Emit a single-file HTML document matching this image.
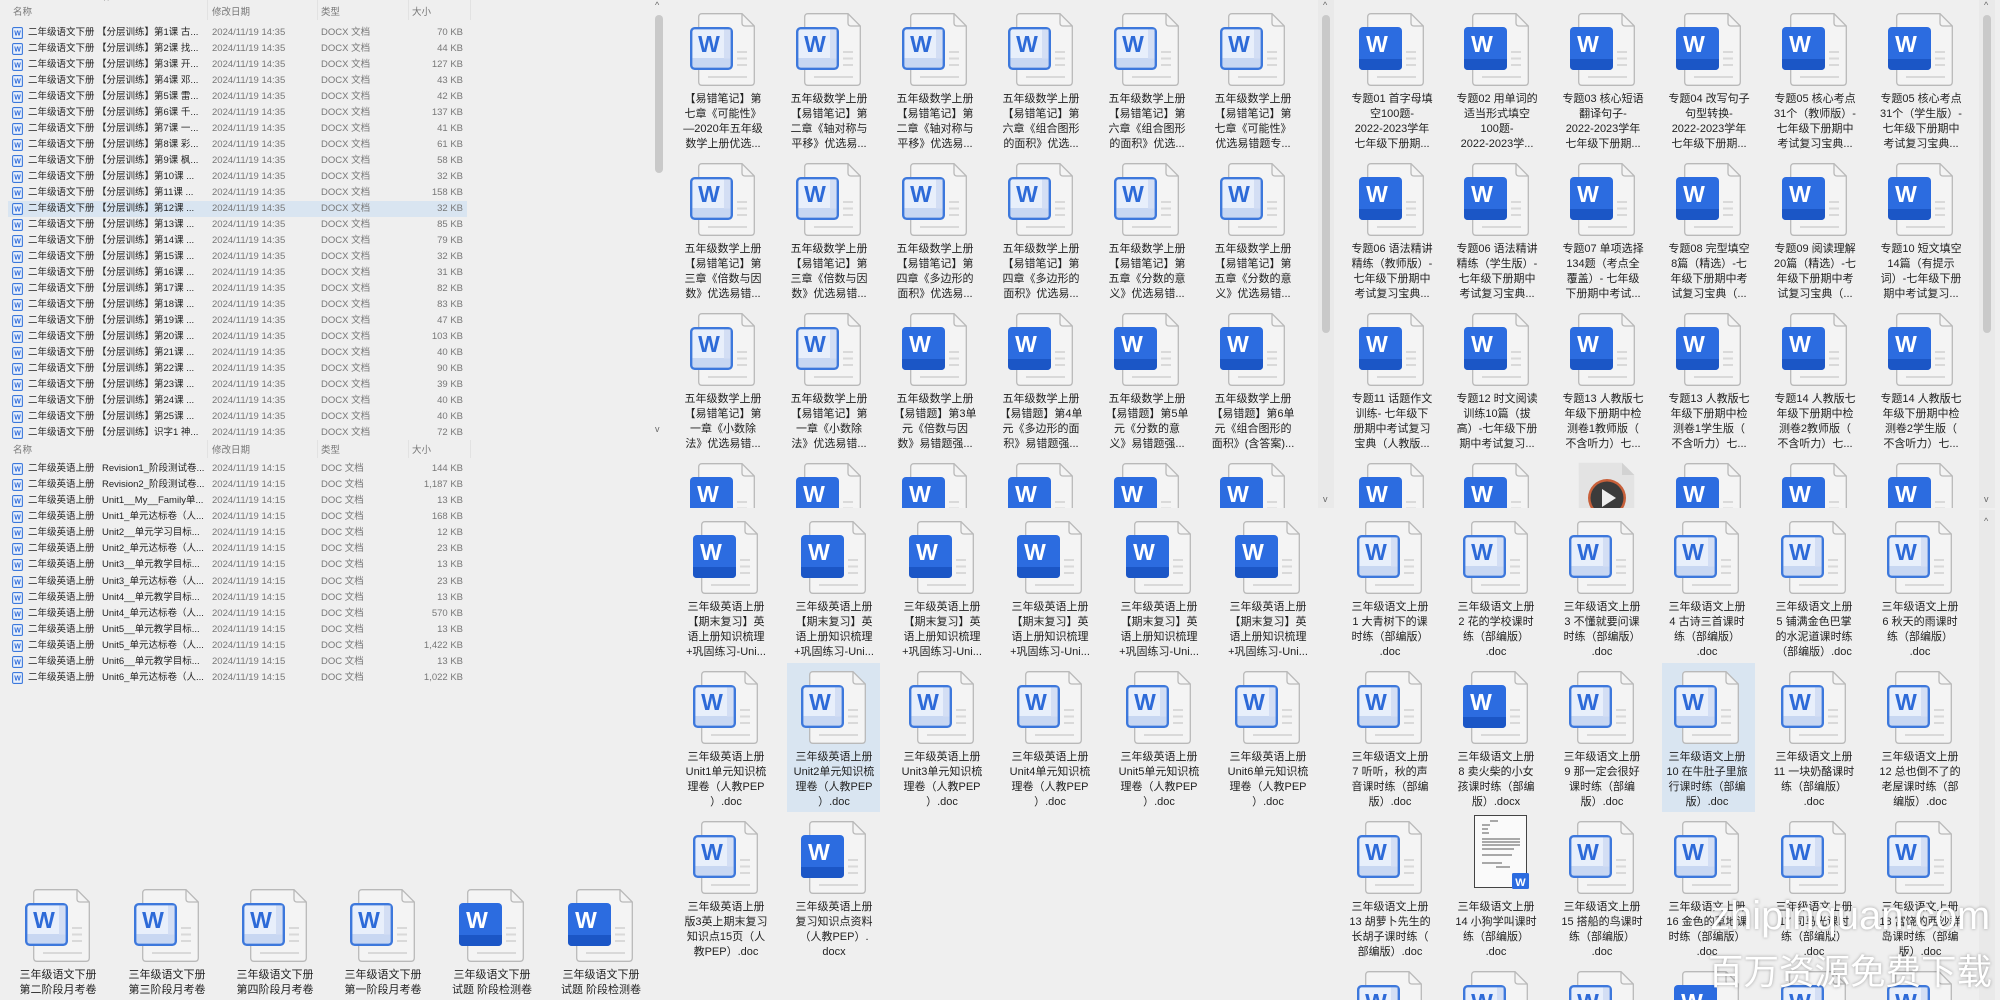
<!DOCTYPE html>
<html><head><meta charset="utf-8">
<style>
*{margin:0;padding:0;box-sizing:border-box}
html,body{width:2000px;height:1000px;overflow:hidden;background:#efefef;font-family:"Liberation Sans","Noto Sans CJK SC",sans-serif}
.p{position:absolute;overflow:hidden}
.r{position:absolute;left:0;width:470px;height:16px;line-height:16px;font-size:9.5px;white-space:nowrap}
.r span{position:absolute;top:0}
.n{left:28px;color:#222}.m{left:97px;color:#222}.d{left:212px;color:#777}.y{left:321px;color:#777}.s{right:7px;color:#777;text-align:right}
.li{position:absolute;left:12px;top:2px;width:11px;height:12px}
.h{position:absolute;font-size:9.5px;color:#777;white-space:nowrap}
.it{position:absolute;width:108px;height:140px}
.it svg{position:absolute;left:20px;top:0;width:70px;height:75px}
.t{position:absolute;top:79px;left:0;width:108px;text-align:center;font-size:11px;line-height:15px;white-space:nowrap;color:#222}
.sel{position:absolute;background:#d9e5f1}
.sb{position:absolute;width:8px;background:#c9c9c9;border-radius:4px}
.ar{position:absolute;font-size:9px;color:#666}
</style></head><body>
<svg width="0" height="0" style="position:absolute">
<defs>
<symbol id="pg" viewBox="0 0 70 75">
<path d="M13 0.7H53L65.3 13V69Q65.3 72.3 62 72.3H13Q9.7 72.3 9.7 69V4Q9.7 0.7 13 0.7Z" fill="#f4f4f4" stroke="#b9b9b9" stroke-width="1.3"/>
<path d="M53 0.7V10Q53 13 56 13H65.3" fill="none" stroke="#b9b9b9" stroke-width="1.3"/>
<path d="M48 39H58M48 45.5H58M48 52H58M19 64H58" stroke="#d9d9d9" stroke-width="2"/>
</symbol>
<symbol id="ws" viewBox="0 0 70 75">
<use href="#pg"/>
<rect x="1" y="14" width="43" height="43" rx="4" fill="#2c6ce0"/>
<path d="M1 46H44V53Q44 57 40 57H5Q1 57 1 53Z" fill="#1b56c6"/>
<text x="19" y="39" font-family="Liberation Sans" font-weight="bold" font-size="23" fill="#fff" text-anchor="middle">W</text>
</symbol>
<symbol id="wl" viewBox="0 0 70 75">
<use href="#pg"/>
<rect x="2.2" y="15.2" width="40.6" height="40.6" rx="3.5" fill="#e8effb" stroke="#3d78dc" stroke-width="2.4"/>
<path d="M3.5 45H41.5V52Q41.5 54.5 39 54.5H6Q3.5 54.5 3.5 52Z" fill="#c8d7f2"/>
<rect x="35" y="16.5" width="6.5" height="29" fill="#d3def4"/>
<text x="20" y="39" font-family="Liberation Sans" font-weight="bold" font-size="23" fill="#2d6ad8" text-anchor="middle">W</text>
</symbol>
<symbol id="vd" viewBox="0 0 70 75">
<path d="M13 0.7H53L65.3 13V72.3H9.7V0.7Z" fill="#e3e3e3"/>
<path d="M53 0.7V13H65.3" fill="#d2d2d2"/>
<circle cx="38" cy="36" r="19" fill="#c8603a"/>
<circle cx="38" cy="36" r="16.5" fill="#3b3b3b"/>
<path d="M33 27L47 36L33 45Z" fill="#eee"/>
</symbol>
<symbol id="th" viewBox="0 0 70 75">
<rect x="12.5" y="0.5" width="52" height="72" fill="#fafafa" stroke="#444" stroke-width="1"/>
<path d="M28 6H36M20 10H28M20 14H26M20 18H27M20 24H58M20 27H58M20 30H58M20 34H52M20 40H50M20 48H40M34 52H48" stroke="#555" stroke-width="1.1"/>
<rect x="50" y="58" width="17" height="16" rx="1.5" fill="#2c6ce0"/>
<text x="58.5" y="71" font-family="Liberation Sans" font-weight="bold" font-size="11" fill="#fff" text-anchor="middle">W</text>
</symbol>
<symbol id="li" viewBox="0 0 11 12">
<rect x="0.6" y="0.6" width="9.8" height="10.8" rx="1.2" fill="#e9f0fb" stroke="#3b78dc" stroke-width="1.1"/>
<text x="5.5" y="8.6" font-family="Liberation Sans" font-weight="bold" font-size="7" fill="#2d6ad8" text-anchor="middle">W</text>
</symbol>
</defs></svg>

<!-- P1 list 1 -->
<div class="p" style="left:0;top:0;width:666px;height:440px">
<div class="h" style="left:104px;top:-4px;font-size:10px">^</div>
<div class="h" style="left:13px;top:4px">名称</div><div class="h" style="left:212px;top:4px">修改日期</div><div class="h" style="left:321px;top:4px">类型</div><div class="h" style="left:412px;top:4px">大小</div>
<div style="position:absolute;left:207px;top:0;width:1px;height:20px;background:#e2e2e2"></div>
<div style="position:absolute;left:317px;top:0;width:1px;height:20px;background:#e2e2e2"></div>
<div style="position:absolute;left:408px;top:0;width:1px;height:20px;background:#e2e2e2"></div>
<div style="position:absolute;left:470px;top:0;width:1px;height:20px;background:#e2e2e2"></div>
<div class="sel" style="left:8px;top:201px;width:459px;height:16px"></div>
<div class="r" style="top:25px"><svg class="li"><use href="#li"/></svg><span class="n">二年级语文下册</span><span class="m">【分层训练】第1课 古...</span><span class="d">2024/11/19 14:35</span><span class="y">DOCX 文档</span><span class="s">70 KB</span></div>
<div class="r" style="top:41px"><svg class="li"><use href="#li"/></svg><span class="n">二年级语文下册</span><span class="m">【分层训练】第2课 找...</span><span class="d">2024/11/19 14:35</span><span class="y">DOCX 文档</span><span class="s">44 KB</span></div>
<div class="r" style="top:57px"><svg class="li"><use href="#li"/></svg><span class="n">二年级语文下册</span><span class="m">【分层训练】第3课 开...</span><span class="d">2024/11/19 14:35</span><span class="y">DOCX 文档</span><span class="s">127 KB</span></div>
<div class="r" style="top:73px"><svg class="li"><use href="#li"/></svg><span class="n">二年级语文下册</span><span class="m">【分层训练】第4课 邓...</span><span class="d">2024/11/19 14:35</span><span class="y">DOCX 文档</span><span class="s">43 KB</span></div>
<div class="r" style="top:89px"><svg class="li"><use href="#li"/></svg><span class="n">二年级语文下册</span><span class="m">【分层训练】第5课 雷...</span><span class="d">2024/11/19 14:35</span><span class="y">DOCX 文档</span><span class="s">42 KB</span></div>
<div class="r" style="top:105px"><svg class="li"><use href="#li"/></svg><span class="n">二年级语文下册</span><span class="m">【分层训练】第6课 千...</span><span class="d">2024/11/19 14:35</span><span class="y">DOCX 文档</span><span class="s">137 KB</span></div>
<div class="r" style="top:121px"><svg class="li"><use href="#li"/></svg><span class="n">二年级语文下册</span><span class="m">【分层训练】第7课 一...</span><span class="d">2024/11/19 14:35</span><span class="y">DOCX 文档</span><span class="s">41 KB</span></div>
<div class="r" style="top:137px"><svg class="li"><use href="#li"/></svg><span class="n">二年级语文下册</span><span class="m">【分层训练】第8课 彩...</span><span class="d">2024/11/19 14:35</span><span class="y">DOCX 文档</span><span class="s">61 KB</span></div>
<div class="r" style="top:153px"><svg class="li"><use href="#li"/></svg><span class="n">二年级语文下册</span><span class="m">【分层训练】第9课 枫...</span><span class="d">2024/11/19 14:35</span><span class="y">DOCX 文档</span><span class="s">58 KB</span></div>
<div class="r" style="top:169px"><svg class="li"><use href="#li"/></svg><span class="n">二年级语文下册</span><span class="m">【分层训练】第10课 ...</span><span class="d">2024/11/19 14:35</span><span class="y">DOCX 文档</span><span class="s">32 KB</span></div>
<div class="r" style="top:185px"><svg class="li"><use href="#li"/></svg><span class="n">二年级语文下册</span><span class="m">【分层训练】第11课 ...</span><span class="d">2024/11/19 14:35</span><span class="y">DOCX 文档</span><span class="s">158 KB</span></div>
<div class="r" style="top:201px"><svg class="li"><use href="#li"/></svg><span class="n">二年级语文下册</span><span class="m">【分层训练】第12课 ...</span><span class="d">2024/11/19 14:35</span><span class="y">DOCX 文档</span><span class="s">32 KB</span></div>
<div class="r" style="top:217px"><svg class="li"><use href="#li"/></svg><span class="n">二年级语文下册</span><span class="m">【分层训练】第13课 ...</span><span class="d">2024/11/19 14:35</span><span class="y">DOCX 文档</span><span class="s">85 KB</span></div>
<div class="r" style="top:233px"><svg class="li"><use href="#li"/></svg><span class="n">二年级语文下册</span><span class="m">【分层训练】第14课 ...</span><span class="d">2024/11/19 14:35</span><span class="y">DOCX 文档</span><span class="s">79 KB</span></div>
<div class="r" style="top:249px"><svg class="li"><use href="#li"/></svg><span class="n">二年级语文下册</span><span class="m">【分层训练】第15课 ...</span><span class="d">2024/11/19 14:35</span><span class="y">DOCX 文档</span><span class="s">32 KB</span></div>
<div class="r" style="top:265px"><svg class="li"><use href="#li"/></svg><span class="n">二年级语文下册</span><span class="m">【分层训练】第16课 ...</span><span class="d">2024/11/19 14:35</span><span class="y">DOCX 文档</span><span class="s">31 KB</span></div>
<div class="r" style="top:281px"><svg class="li"><use href="#li"/></svg><span class="n">二年级语文下册</span><span class="m">【分层训练】第17课 ...</span><span class="d">2024/11/19 14:35</span><span class="y">DOCX 文档</span><span class="s">82 KB</span></div>
<div class="r" style="top:297px"><svg class="li"><use href="#li"/></svg><span class="n">二年级语文下册</span><span class="m">【分层训练】第18课 ...</span><span class="d">2024/11/19 14:35</span><span class="y">DOCX 文档</span><span class="s">83 KB</span></div>
<div class="r" style="top:313px"><svg class="li"><use href="#li"/></svg><span class="n">二年级语文下册</span><span class="m">【分层训练】第19课 ...</span><span class="d">2024/11/19 14:35</span><span class="y">DOCX 文档</span><span class="s">47 KB</span></div>
<div class="r" style="top:329px"><svg class="li"><use href="#li"/></svg><span class="n">二年级语文下册</span><span class="m">【分层训练】第20课 ...</span><span class="d">2024/11/19 14:35</span><span class="y">DOCX 文档</span><span class="s">103 KB</span></div>
<div class="r" style="top:345px"><svg class="li"><use href="#li"/></svg><span class="n">二年级语文下册</span><span class="m">【分层训练】第21课 ...</span><span class="d">2024/11/19 14:35</span><span class="y">DOCX 文档</span><span class="s">40 KB</span></div>
<div class="r" style="top:361px"><svg class="li"><use href="#li"/></svg><span class="n">二年级语文下册</span><span class="m">【分层训练】第22课 ...</span><span class="d">2024/11/19 14:35</span><span class="y">DOCX 文档</span><span class="s">90 KB</span></div>
<div class="r" style="top:377px"><svg class="li"><use href="#li"/></svg><span class="n">二年级语文下册</span><span class="m">【分层训练】第23课 ...</span><span class="d">2024/11/19 14:35</span><span class="y">DOCX 文档</span><span class="s">39 KB</span></div>
<div class="r" style="top:393px"><svg class="li"><use href="#li"/></svg><span class="n">二年级语文下册</span><span class="m">【分层训练】第24课 ...</span><span class="d">2024/11/19 14:35</span><span class="y">DOCX 文档</span><span class="s">40 KB</span></div>
<div class="r" style="top:409px"><svg class="li"><use href="#li"/></svg><span class="n">二年级语文下册</span><span class="m">【分层训练】第25课 ...</span><span class="d">2024/11/19 14:35</span><span class="y">DOCX 文档</span><span class="s">40 KB</span></div>
<div class="r" style="top:425px"><svg class="li"><use href="#li"/></svg><span class="n">二年级语文下册</span><span class="m">【分层训练】识字1 神...</span><span class="d">2024/11/19 14:35</span><span class="y">DOCX 文档</span><span class="s">72 KB</span></div>
<div class="sb" style="left:655px;top:15px;height:158px"></div>
<div class="ar" style="left:655px;top:0">^</div><div class="ar" style="left:655px;top:424px">v</div>
</div>

<!-- P2 list 2 + bottom icons -->
<div class="p" style="left:0;top:440px;width:666px;height:560px">
<div class="h" style="left:104px;top:-6px;font-size:10px">^</div>
<div class="h" style="left:13px;top:2px">名称</div><div class="h" style="left:212px;top:2px">修改日期</div><div class="h" style="left:321px;top:2px">类型</div><div class="h" style="left:412px;top:2px">大小</div>
<div style="position:absolute;left:207px;top:0;width:1px;height:18px;background:#e2e2e2"></div>
<div style="position:absolute;left:317px;top:0;width:1px;height:18px;background:#e2e2e2"></div>
<div style="position:absolute;left:408px;top:0;width:1px;height:18px;background:#e2e2e2"></div>
<div style="position:absolute;left:470px;top:0;width:1px;height:18px;background:#e2e2e2"></div>
<div class="r" style="top:21px"><svg class="li"><use href="#li"/></svg><span class="n">二年级英语上册</span><span class="m" style="left:102px">Revision1_阶段测试卷...</span><span class="d">2024/11/19 14:15</span><span class="y">DOC 文档</span><span class="s">144 KB</span></div>
<div class="r" style="top:37px"><svg class="li"><use href="#li"/></svg><span class="n">二年级英语上册</span><span class="m" style="left:102px">Revision2_阶段测试卷...</span><span class="d">2024/11/19 14:15</span><span class="y">DOC 文档</span><span class="s">1,187 KB</span></div>
<div class="r" style="top:53px"><svg class="li"><use href="#li"/></svg><span class="n">二年级英语上册</span><span class="m" style="left:102px">Unit1__My__Family单...</span><span class="d">2024/11/19 14:15</span><span class="y">DOC 文档</span><span class="s">13 KB</span></div>
<div class="r" style="top:69px"><svg class="li"><use href="#li"/></svg><span class="n">二年级英语上册</span><span class="m" style="left:102px">Unit1_单元达标卷（人...</span><span class="d">2024/11/19 14:15</span><span class="y">DOC 文档</span><span class="s">168 KB</span></div>
<div class="r" style="top:85px"><svg class="li"><use href="#li"/></svg><span class="n">二年级英语上册</span><span class="m" style="left:102px">Unit2__单元学习目标...</span><span class="d">2024/11/19 14:15</span><span class="y">DOC 文档</span><span class="s">12 KB</span></div>
<div class="r" style="top:101px"><svg class="li"><use href="#li"/></svg><span class="n">二年级英语上册</span><span class="m" style="left:102px">Unit2_单元达标卷（人...</span><span class="d">2024/11/19 14:15</span><span class="y">DOC 文档</span><span class="s">23 KB</span></div>
<div class="r" style="top:117px"><svg class="li"><use href="#li"/></svg><span class="n">二年级英语上册</span><span class="m" style="left:102px">Unit3__单元教学目标...</span><span class="d">2024/11/19 14:15</span><span class="y">DOC 文档</span><span class="s">13 KB</span></div>
<div class="r" style="top:134px"><svg class="li"><use href="#li"/></svg><span class="n">二年级英语上册</span><span class="m" style="left:102px">Unit3_单元达标卷（人...</span><span class="d">2024/11/19 14:15</span><span class="y">DOC 文档</span><span class="s">23 KB</span></div>
<div class="r" style="top:150px"><svg class="li"><use href="#li"/></svg><span class="n">二年级英语上册</span><span class="m" style="left:102px">Unit4__单元教学目标...</span><span class="d">2024/11/19 14:15</span><span class="y">DOC 文档</span><span class="s">13 KB</span></div>
<div class="r" style="top:166px"><svg class="li"><use href="#li"/></svg><span class="n">二年级英语上册</span><span class="m" style="left:102px">Unit4_单元达标卷（人...</span><span class="d">2024/11/19 14:15</span><span class="y">DOC 文档</span><span class="s">570 KB</span></div>
<div class="r" style="top:182px"><svg class="li"><use href="#li"/></svg><span class="n">二年级英语上册</span><span class="m" style="left:102px">Unit5__单元教学目标...</span><span class="d">2024/11/19 14:15</span><span class="y">DOC 文档</span><span class="s">13 KB</span></div>
<div class="r" style="top:198px"><svg class="li"><use href="#li"/></svg><span class="n">二年级英语上册</span><span class="m" style="left:102px">Unit5_单元达标卷（人...</span><span class="d">2024/11/19 14:15</span><span class="y">DOC 文档</span><span class="s">1,422 KB</span></div>
<div class="r" style="top:214px"><svg class="li"><use href="#li"/></svg><span class="n">二年级英语上册</span><span class="m" style="left:102px">Unit6__单元教学目标...</span><span class="d">2024/11/19 14:15</span><span class="y">DOC 文档</span><span class="s">13 KB</span></div>
<div class="r" style="top:230px"><svg class="li"><use href="#li"/></svg><span class="n">二年级英语上册</span><span class="m" style="left:102px">Unit6_单元达标卷（人...</span><span class="d">2024/11/19 14:15</span><span class="y">DOC 文档</span><span class="s">1,022 KB</span></div>

<div class="it" style="left:4px;top:449px"><svg><use href="#wl"/></svg><div class="t">三年级语文下册<br>第二阶段月考卷</div></div>
<div class="it" style="left:113px;top:449px"><svg><use href="#wl"/></svg><div class="t">三年级语文下册<br>第三阶段月考卷</div></div>
<div class="it" style="left:221px;top:449px"><svg><use href="#wl"/></svg><div class="t">三年级语文下册<br>第四阶段月考卷</div></div>
<div class="it" style="left:329px;top:449px"><svg><use href="#wl"/></svg><div class="t">三年级语文下册<br>第一阶段月考卷</div></div>
<div class="it" style="left:438px;top:449px"><svg><use href="#ws"/></svg><div class="t">三年级语文下册<br>试题 阶段检测卷</div></div>
<div class="it" style="left:547px;top:449px"><svg><use href="#ws"/></svg><div class="t">三年级语文下册<br>试题 阶段检测卷</div></div>
</div>

<!-- P3 middle top -->
<div class="p" style="left:668px;top:0;width:666px;height:508px">
<div class="it" style="left:1px;top:13px"><svg><use href="#wl"/></svg><div class="t">【易错笔记】第<br>七章《可能性》<br>—2020年五年级<br>数学上册优选...</div></div>
<div class="it" style="left:107px;top:13px"><svg><use href="#wl"/></svg><div class="t">五年级数学上册<br>【易错笔记】第<br>二章《轴对称与<br>平移》优选易...</div></div>
<div class="it" style="left:213px;top:13px"><svg><use href="#wl"/></svg><div class="t">五年级数学上册<br>【易错笔记】第<br>二章《轴对称与<br>平移》优选易...</div></div>
<div class="it" style="left:319px;top:13px"><svg><use href="#wl"/></svg><div class="t">五年级数学上册<br>【易错笔记】第<br>六章《组合图形<br>的面积》优选...</div></div>
<div class="it" style="left:425px;top:13px"><svg><use href="#wl"/></svg><div class="t">五年级数学上册<br>【易错笔记】第<br>六章《组合图形<br>的面积》优选...</div></div>
<div class="it" style="left:531px;top:13px"><svg><use href="#wl"/></svg><div class="t">五年级数学上册<br>【易错笔记】第<br>七章《可能性》<br>优选易错题专...</div></div>

<div class="it" style="left:1px;top:163px"><svg><use href="#wl"/></svg><div class="t">五年级数学上册<br>【易错笔记】第<br>三章《倍数与因<br>数》优选易错...</div></div>
<div class="it" style="left:107px;top:163px"><svg><use href="#wl"/></svg><div class="t">五年级数学上册<br>【易错笔记】第<br>三章《倍数与因<br>数》优选易错...</div></div>
<div class="it" style="left:213px;top:163px"><svg><use href="#wl"/></svg><div class="t">五年级数学上册<br>【易错笔记】第<br>四章《多边形的<br>面积》优选易...</div></div>
<div class="it" style="left:319px;top:163px"><svg><use href="#wl"/></svg><div class="t">五年级数学上册<br>【易错笔记】第<br>四章《多边形的<br>面积》优选易...</div></div>
<div class="it" style="left:425px;top:163px"><svg><use href="#wl"/></svg><div class="t">五年级数学上册<br>【易错笔记】第<br>五章《分数的意<br>义》优选易错...</div></div>
<div class="it" style="left:531px;top:163px"><svg><use href="#wl"/></svg><div class="t">五年级数学上册<br>【易错笔记】第<br>五章《分数的意<br>义》优选易错...</div></div>

<div class="it" style="left:1px;top:313px"><svg><use href="#wl"/></svg><div class="t">五年级数学上册<br>【易错笔记】第<br>一章《小数除<br>法》优选易错...</div></div>
<div class="it" style="left:107px;top:313px"><svg><use href="#wl"/></svg><div class="t">五年级数学上册<br>【易错笔记】第<br>一章《小数除<br>法》优选易错...</div></div>
<div class="it" style="left:213px;top:313px"><svg><use href="#ws"/></svg><div class="t">五年级数学上册<br>【易错题】第3单<br>元《倍数与因<br>数》易错题强...</div></div>
<div class="it" style="left:319px;top:313px"><svg><use href="#ws"/></svg><div class="t">五年级数学上册<br>【易错题】第4单<br>元《多边形的面<br>积》易错题强...</div></div>
<div class="it" style="left:425px;top:313px"><svg><use href="#ws"/></svg><div class="t">五年级数学上册<br>【易错题】第5单<br>元《分数的意<br>义》易错题强...</div></div>
<div class="it" style="left:531px;top:313px"><svg><use href="#ws"/></svg><div class="t">五年级数学上册<br>【易错题】第6单<br>元《组合图形的<br>面积》(含答案)...</div></div>

<div class="it" style="left:1px;top:463px"><svg><use href="#ws"/></svg></div>
<div class="it" style="left:107px;top:463px"><svg><use href="#ws"/></svg></div>
<div class="it" style="left:213px;top:463px"><svg><use href="#ws"/></svg></div>
<div class="it" style="left:319px;top:463px"><svg><use href="#ws"/></svg></div>
<div class="it" style="left:425px;top:463px"><svg><use href="#ws"/></svg></div>
<div class="it" style="left:531px;top:463px"><svg><use href="#ws"/></svg></div>
<div style="position:absolute;left:650px;top:0;width:16px;height:508px;background:#e9e9e9"></div>
<div class="sb" style="left:654px;top:15px;height:318px"></div>
<div class="ar" style="left:655px;top:0">^</div><div class="ar" style="left:655px;top:494px">v</div>
</div>

<!-- P4 middle bottom -->
<div class="p" style="left:668px;top:510px;width:666px;height:490px">
<div class="sel" style="left:119px;top:153px;width:93px;height:149px"></div>
<div class="it" style="left:4px;top:11px"><svg><use href="#ws"/></svg><div class="t">三年级英语上册<br>【期末复习】英<br>语上册知识梳理<br>+巩固练习-Uni...</div></div>
<div class="it" style="left:112px;top:11px"><svg><use href="#ws"/></svg><div class="t">三年级英语上册<br>【期末复习】英<br>语上册知识梳理<br>+巩固练习-Uni...</div></div>
<div class="it" style="left:220px;top:11px"><svg><use href="#ws"/></svg><div class="t">三年级英语上册<br>【期末复习】英<br>语上册知识梳理<br>+巩固练习-Uni...</div></div>
<div class="it" style="left:328px;top:11px"><svg><use href="#ws"/></svg><div class="t">三年级英语上册<br>【期末复习】英<br>语上册知识梳理<br>+巩固练习-Uni...</div></div>
<div class="it" style="left:437px;top:11px"><svg><use href="#ws"/></svg><div class="t">三年级英语上册<br>【期末复习】英<br>语上册知识梳理<br>+巩固练习-Uni...</div></div>
<div class="it" style="left:546px;top:11px"><svg><use href="#ws"/></svg><div class="t">三年级英语上册<br>【期末复习】英<br>语上册知识梳理<br>+巩固练习-Uni...</div></div>

<div class="it" style="left:4px;top:161px"><svg><use href="#wl"/></svg><div class="t">三年级英语上册<br>Unit1单元知识梳<br>理卷（人教PEP<br>）.doc</div></div>
<div class="it" style="left:112px;top:161px"><svg><use href="#wl"/></svg><div class="t">三年级英语上册<br>Unit2单元知识梳<br>理卷（人教PEP<br>）.doc</div></div>
<div class="it" style="left:220px;top:161px"><svg><use href="#wl"/></svg><div class="t">三年级英语上册<br>Unit3单元知识梳<br>理卷（人教PEP<br>）.doc</div></div>
<div class="it" style="left:328px;top:161px"><svg><use href="#wl"/></svg><div class="t">三年级英语上册<br>Unit4单元知识梳<br>理卷（人教PEP<br>）.doc</div></div>
<div class="it" style="left:437px;top:161px"><svg><use href="#wl"/></svg><div class="t">三年级英语上册<br>Unit5单元知识梳<br>理卷（人教PEP<br>）.doc</div></div>
<div class="it" style="left:546px;top:161px"><svg><use href="#wl"/></svg><div class="t">三年级英语上册<br>Unit6单元知识梳<br>理卷（人教PEP<br>）.doc</div></div>

<div class="it" style="left:4px;top:311px"><svg><use href="#wl"/></svg><div class="t">三年级英语上册<br>版3英上期末复习<br>知识点15页（人<br>教PEP）.doc</div></div>
<div class="it" style="left:112px;top:311px"><svg><use href="#ws"/></svg><div class="t">三年级英语上册<br>复习知识点资料<br>（人教PEP）.<br>docx</div></div>
</div>

<!-- P5 right top -->
<div class="p" style="left:1336px;top:0;width:664px;height:508px">
<div class="it" style="left:2px;top:13px"><svg><use href="#ws"/></svg><div class="t">专题01 首字母填<br>空100题-<br>2022-2023学年<br>七年级下册期...</div></div>
<div class="it" style="left:107px;top:13px"><svg><use href="#ws"/></svg><div class="t">专题02 用单词的<br>适当形式填空<br>100题-<br>2022-2023学...</div></div>
<div class="it" style="left:213px;top:13px"><svg><use href="#ws"/></svg><div class="t">专题03 核心短语<br>翻译句子-<br>2022-2023学年<br>七年级下册期...</div></div>
<div class="it" style="left:319px;top:13px"><svg><use href="#ws"/></svg><div class="t">专题04 改写句子<br>句型转换-<br>2022-2023学年<br>七年级下册期...</div></div>
<div class="it" style="left:425px;top:13px"><svg><use href="#ws"/></svg><div class="t">专题05 核心考点<br>31个（教师版）-<br>七年级下册期中<br>考试复习宝典...</div></div>
<div class="it" style="left:531px;top:13px"><svg><use href="#ws"/></svg><div class="t">专题05 核心考点<br>31个（学生版）-<br>七年级下册期中<br>考试复习宝典...</div></div>

<div class="it" style="left:2px;top:163px"><svg><use href="#ws"/></svg><div class="t">专题06 语法精讲<br>精练（教师版）-<br>七年级下册期中<br>考试复习宝典...</div></div>
<div class="it" style="left:107px;top:163px"><svg><use href="#ws"/></svg><div class="t">专题06 语法精讲<br>精练（学生版）-<br>七年级下册期中<br>考试复习宝典...</div></div>
<div class="it" style="left:213px;top:163px"><svg><use href="#ws"/></svg><div class="t">专题07 单项选择<br>134题（考点全<br>覆盖）- 七年级<br>下册期中考试...</div></div>
<div class="it" style="left:319px;top:163px"><svg><use href="#ws"/></svg><div class="t">专题08 完型填空<br>8篇（精选）-七<br>年级下册期中考<br>试复习宝典（...</div></div>
<div class="it" style="left:425px;top:163px"><svg><use href="#ws"/></svg><div class="t">专题09 阅读理解<br>20篇（精选）-七<br>年级下册期中考<br>试复习宝典（...</div></div>
<div class="it" style="left:531px;top:163px"><svg><use href="#ws"/></svg><div class="t">专题10 短文填空<br>14篇（有提示<br>词）-七年级下册<br>期中考试复习...</div></div>

<div class="it" style="left:2px;top:313px"><svg><use href="#ws"/></svg><div class="t">专题11 话题作文<br>训练- 七年级下<br>册期中考试复习<br>宝典（人教版...</div></div>
<div class="it" style="left:107px;top:313px"><svg><use href="#ws"/></svg><div class="t">专题12 时文阅读<br>训练10篇（拔<br>高）-七年级下册<br>期中考试复习...</div></div>
<div class="it" style="left:213px;top:313px"><svg><use href="#ws"/></svg><div class="t">专题13 人教版七<br>年级下册期中检<br>测卷1教师版（<br>不含听力）七...</div></div>
<div class="it" style="left:319px;top:313px"><svg><use href="#ws"/></svg><div class="t">专题13 人教版七<br>年级下册期中检<br>测卷1学生版（<br>不含听力）七...</div></div>
<div class="it" style="left:425px;top:313px"><svg><use href="#ws"/></svg><div class="t">专题14 人教版七<br>年级下册期中检<br>测卷2教师版（<br>不含听力）七...</div></div>
<div class="it" style="left:531px;top:313px"><svg><use href="#ws"/></svg><div class="t">专题14 人教版七<br>年级下册期中检<br>测卷2学生版（<br>不含听力）七...</div></div>

<div class="it" style="left:2px;top:463px"><svg><use href="#ws"/></svg></div>
<div class="it" style="left:107px;top:463px"><svg><use href="#ws"/></svg></div>
<div class="it" style="left:213px;top:462px"><svg><use href="#vd"/></svg></div>
<div class="it" style="left:319px;top:463px"><svg><use href="#ws"/></svg></div>
<div class="it" style="left:425px;top:463px"><svg><use href="#ws"/></svg></div>
<div class="it" style="left:531px;top:463px"><svg><use href="#ws"/></svg></div>
<div style="position:absolute;left:643px;top:0;width:16px;height:508px;background:#e9e9e9"></div>
<div class="sb" style="left:647px;top:15px;height:318px"></div>
<div class="ar" style="left:648px;top:0">^</div><div class="ar" style="left:648px;top:494px">v</div>
</div>

<!-- P6 right bottom -->
<div class="p" style="left:1336px;top:510px;width:664px;height:490px">
<div class="sel" style="left:326px;top:153px;width:93px;height:149px"></div>
<div class="it" style="left:0px;top:11px"><svg><use href="#wl"/></svg><div class="t">三年级语文上册<br>1 大青树下的课<br>时练（部编版）<br>.doc</div></div>
<div class="it" style="left:106px;top:11px"><svg><use href="#wl"/></svg><div class="t">三年级语文上册<br>2 花的学校课时<br>练（部编版）<br>.doc</div></div>
<div class="it" style="left:212px;top:11px"><svg><use href="#wl"/></svg><div class="t">三年级语文上册<br>3 不懂就要问课<br>时练（部编版）<br>.doc</div></div>
<div class="it" style="left:317px;top:11px"><svg><use href="#wl"/></svg><div class="t">三年级语文上册<br>4 古诗三首课时<br>练（部编版）<br>.doc</div></div>
<div class="it" style="left:424px;top:11px"><svg><use href="#wl"/></svg><div class="t">三年级语文上册<br>5 铺满金色巴掌<br>的水泥道课时练<br>（部编版）.doc</div></div>
<div class="it" style="left:530px;top:11px"><svg><use href="#wl"/></svg><div class="t">三年级语文上册<br>6 秋天的雨课时<br>练（部编版）<br>.doc</div></div>

<div class="it" style="left:0px;top:161px"><svg><use href="#wl"/></svg><div class="t">三年级语文上册<br>7 听听，秋的声<br>音课时练（部编<br>版）.doc</div></div>
<div class="it" style="left:106px;top:161px"><svg><use href="#ws"/></svg><div class="t">三年级语文上册<br>8 卖火柴的小女<br>孩课时练（部编<br>版）.docx</div></div>
<div class="it" style="left:212px;top:161px"><svg><use href="#wl"/></svg><div class="t">三年级语文上册<br>9 那一定会很好<br>课时练（部编<br>版）.doc</div></div>
<div class="it" style="left:317px;top:161px"><svg><use href="#wl"/></svg><div class="t">三年级语文上册<br>10 在牛肚子里旅<br>行课时练（部编<br>版）.doc</div></div>
<div class="it" style="left:424px;top:161px"><svg><use href="#wl"/></svg><div class="t">三年级语文上册<br>11 一块奶酪课时<br>练（部编版）<br>.doc</div></div>
<div class="it" style="left:530px;top:161px"><svg><use href="#wl"/></svg><div class="t">三年级语文上册<br>12 总也倒不了的<br>老屋课时练（部<br>编版）.doc</div></div>

<div class="it" style="left:0px;top:311px"><svg><use href="#wl"/></svg><div class="t">三年级语文上册<br>13 胡萝卜先生的<br>长胡子课时练（<br>部编版）.doc</div></div>
<div class="it" style="left:106px;top:305px"><svg><use href="#th"/></svg><div class="t" style="top:85px">三年级语文上册<br>14 小狗学叫课时<br>练（部编版）<br>.doc</div></div>
<div class="it" style="left:212px;top:311px"><svg><use href="#wl"/></svg><div class="t">三年级语文上册<br>15 搭船的鸟课时<br>练（部编版）<br>.doc</div></div>
<div class="it" style="left:317px;top:311px"><svg><use href="#wl"/></svg><div class="t">三年级语文上册<br>16 金色的草地课<br>时练（部编版）<br>.doc</div></div>
<div class="it" style="left:424px;top:311px"><svg><use href="#wl"/></svg><div class="t">三年级语文上册<br>17 司马光课时<br>练（部编版）<br>.doc</div></div>
<div class="it" style="left:530px;top:311px"><svg><use href="#wl"/></svg><div class="t">三年级语文上册<br>18 富饶的西沙群<br>岛课时练（部编<br>版）.doc</div></div>

<div class="it" style="left:0px;top:461px"><svg><use href="#wl"/></svg></div>
<div class="it" style="left:106px;top:461px"><svg><use href="#wl"/></svg></div>
<div class="it" style="left:212px;top:461px"><svg><use href="#wl"/></svg></div>
<div class="it" style="left:317px;top:461px"><svg><use href="#ws"/></svg></div>
<div class="it" style="left:424px;top:461px"><svg><use href="#wl"/></svg></div>
<div class="it" style="left:530px;top:461px"><svg><use href="#wl"/></svg></div>
<div style="position:absolute;left:643px;top:0;width:16px;height:490px;background:#e9e9e9"></div>
<div class="ar" style="left:648px;top:6px">^</div>
</div>

<!-- watermark -->
<div style="position:absolute;left:1710px;top:893px;font-size:40px;line-height:46px;color:#fff;text-shadow:0 0 3px rgba(0,0,0,.35);white-space:nowrap;font-family:'Liberation Sans',sans-serif">zhipinquan.com</div>
<div style="position:absolute;left:1708px;top:950px;font-size:35.5px;line-height:44px;color:#fff;text-shadow:0 0 3px rgba(0,0,0,.35);white-space:nowrap;font-family:'Liberation Sans','Noto Sans CJK SC',sans-serif">百万资源免费下载</div>
</body></html>
